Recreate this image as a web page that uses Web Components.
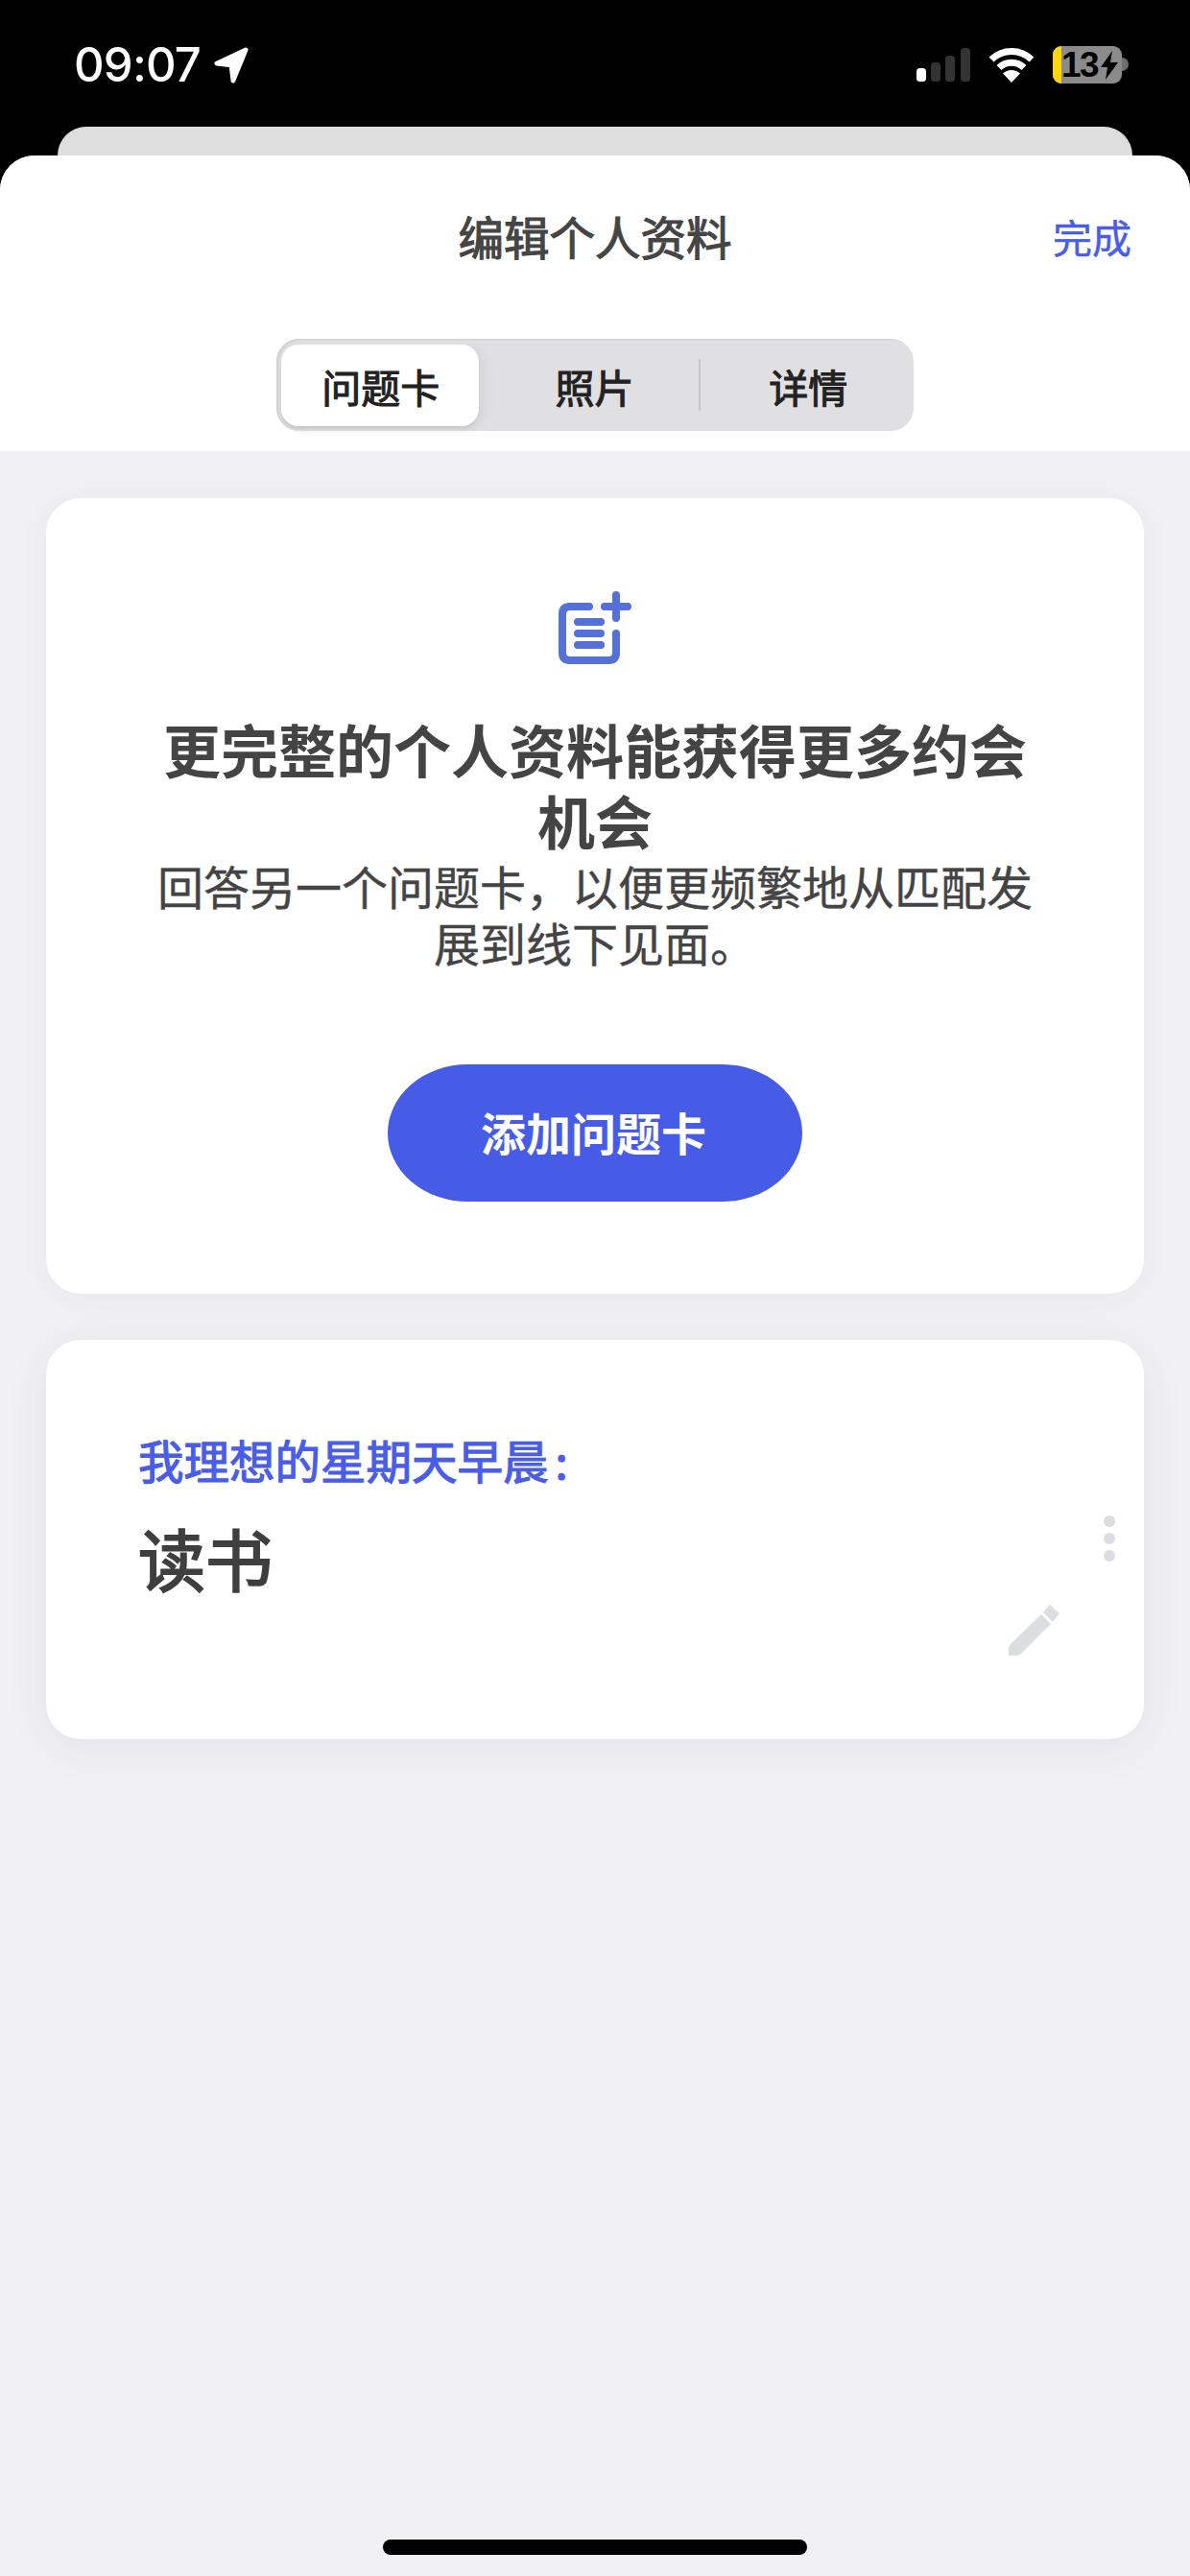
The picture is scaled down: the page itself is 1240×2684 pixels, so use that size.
<!DOCTYPE html>
<html lang="zh">
<head>
<meta charset="utf-8">
<title>编辑个人资料</title>
<style>
    html, body { margin: 0; height: 100%; background: #000; }
    body { font-family: "Noto Sans CJK SC", "Liberation Sans", sans-serif; }
</style>
</head>
<body>
<app-screen>
    <status-bar slot="status" time="09:07" battery="13"></status-bar>
    <sheet-header slot="header" action="完成">
        编辑个人资料
        <segmented-control slot="tabs" items="问题卡,照片,详情"></segmented-control>
    </sheet-header>
    <prompt-card action="添加问题卡">
        <span slot="title">更完整的个人资料能获得更多约会机会</span>
        回答另一个问题卡，以便更频繁地从匹配发展到线下见面。
    </prompt-card>
    <answer-card question="我理想的星期天早晨">读书</answer-card>
</app-screen>

<script>
customElements.define("app-screen",
class AppScreen extends HTMLElement {
    constructor() {
        super();
        this.attachShadow({mode: "open"});
        this.shadowRoot.innerHTML = `
<style>
    :host {
        display: flex;
        flex-direction: column;
        height: 2684px;
        background: #000;
    }
    .back-sheet {
        flex: none;
        height: 30px;
        margin: 0 60px;
        background: #dedede;
        border-radius: 30px 30px 0 0;
    }
    .sheet {
        flex: 1;
        display: flex;
        flex-direction: column;
        background: #f1f1f4;
        border-radius: 36px 36px 0 0;
        overflow: hidden;
    }
    .cards {
        flex: 1;
        display: flex;
        flex-direction: column;
        gap: 48px;
        padding: 49px 48px 0;
    }
    .home {
        flex: none;
        align-self: center;
        width: 442px;
        height: 16px;
        margin-bottom: 22px;
        border-radius: 8px;
        background: #000;
    }
</style>
<slot name="status"></slot>
<div class="back-sheet"></div>
<div class="sheet">
    <slot name="header"></slot>
    <div class="cards"><slot></slot></div>
    <div class="home"></div>
</div>`;
    }
});

customElements.define("status-bar",
class StatusBar extends HTMLElement {
    constructor() {
        super();
        this.attachShadow({mode: "open"});
    }

    connectedCallback() {
        this.shadowRoot.innerHTML = `
<style>
    :host {
        display: flex;
        flex: none;
        align-items: flex-start;
        height: 132px;
        box-sizing: border-box;
        padding: 48px 64px 0 77px;
        color: #fff;
    }
    .time {
        font: 500 49px/40px Inter, "Liberation Sans", sans-serif;
        letter-spacing: -0.8px;
    }
    .arrow { margin: 1px 0 0 14px; }
    .right { display: flex; align-items: flex-start; margin-left: auto; }
    .signal { margin: 2px 0 0; }
    .wifi { margin: 1px 0 0 19px; }
    .battery {
        display: flex;
        align-items: center;
        width: 72px;
        height: 39px;
        margin-left: 19px;
        border-radius: 9px;
        overflow: hidden;
        background: #8b8b8b;
        color: #000;
    }
    .charge { flex: none; width: 9px; height: 100%; background: #ffd60a; }
    .level { font: 700 37px/39px "Liberation Sans", sans-serif; letter-spacing: -1.5px; }
    .bolt { flex: none; margin-left: 2px; }
    .nub { width: 7px; height: 14px; margin-top: 12px; background: #6f6f6f; border-radius: 0 7px 7px 0; }
</style>
<span class="time">${this.getAttribute("time")}</span>
<svg class="arrow" width="36" height="38" viewBox="0 0 38 40">
    <path d="M35 3 L3 18 L19 20 L21 37 Z" fill="#fff" stroke="#fff" stroke-width="5" stroke-linejoin="round"/>
</svg>
<div class="right">
    <svg class="signal" width="56" height="35" viewBox="0 0 56 35">
        <rect x="0" y="21" width="10" height="14" rx="3.5" fill="#fff"/>
        <rect x="15" y="15" width="10" height="20" rx="3.5" fill="#333"/>
        <rect x="30" y="8" width="10" height="27" rx="3.5" fill="#333"/>
        <rect x="46" y="0" width="10" height="35" rx="3.5" fill="#333"/>
    </svg>
    <svg class="wifi" width="48" height="37" viewBox="0 0 48 37">
        <g fill="none" stroke="#fff" stroke-width="7">
            <path d="M3 13 A30 30 0 0 1 45 13"/>
            <path d="M11 21.500 A18.500 18.500 0 0 1 37 21.500"/>
        </g>
        <path d="M24 37 L15 27.500 A13 13 0 0 1 33 27.500 Z" fill="#fff"/>
    </svg>
    <div class="battery">
        <span class="charge"></span>
        <span class="level">${this.getAttribute("battery")}</span>
        <svg class="bolt" width="20" height="30" viewBox="0 0 20 30">
            <path d="M13 0 L1 17 H8 L6 30 L19 12 H11 Z" fill="#000"/>
        </svg>
    </div>
    <span class="nub"></span>
</div>`;
    }
});

customElements.define("sheet-header",
class SheetHeader extends HTMLElement {
    constructor() {
        super();
        this.attachShadow({mode: "open"});
    }

    connectedCallback() {
        this.shadowRoot.innerHTML = `
<style>
    :host {
        display: block;
        flex: none;
        height: 308px;
        background: #fff;
    }
    .bar {
        display: grid;
        grid-template-columns: 1fr auto 1fr;
        align-items: center;
        height: 167px;
        margin-bottom: 24px;
        padding: 0 61px;
        box-sizing: border-box;
    }
    .title {
        grid-column: 2;
        font-size: 47.500px;
        font-weight: 400;
        -webkit-text-stroke: 1.2px #454545;
        color: #454545;
    }
    .action {
        justify-self: end;
        font-size: 41px;
        font-weight: 400;
        -webkit-text-stroke: 0.5px #4a5de6;
        color: #4a5de6;
    }
</style>
<div class="bar">
    <span class="title"><slot></slot></span>
    <span class="action">${this.getAttribute("action")}</span>
</div>
<slot name="tabs"></slot>`;
    }
});

customElements.define("segmented-control",
class SegmentedControl extends HTMLElement {
    constructor() {
        super();
        this.attachShadow({mode: "open"});
    }

    connectedCallback() {
        const items = this.getAttribute("items").split(",");
        const cells = items.map((item, i) => {
            return `<span class="cell ${i == 0 ? "active" : ""} ${i == 2 ? "split" : ""}">${item}</span>`;
        }).join("");
        this.shadowRoot.innerHTML = `
<style>
    :host {
        display: grid;
        grid-template-columns: repeat(3, 1fr);
        width: 664px;
        height: 96px;
        box-sizing: border-box;
        margin: 0 auto;
        padding: 6px 6px 5px 5px;
        background: #e0e0e2;
        border-radius: 24px;
        box-shadow: inset 2px 1px 2px #cfcfd1;
    }
    .cell {
        position: relative;
        display: flex;
        align-items: center;
        justify-content: center;
        font-size: 41px;
        font-weight: 400;
        -webkit-text-stroke: 1.1px #222;
        color: #222;
    }
    .active {
        background: #fff;
        border-radius: 18px;
        box-shadow: 0 3px 3px #c9c9cb, 6px 2px 10px #d6d6d8;
        margin-right: 12px;
        padding-left: 2px;
    }
    .split { padding-left: 10px; }
    .split::before {
        content: "";
        position: absolute;
        left: 0;
        top: 15px;
        bottom: 16px;
        width: 2px;
        background: #c6c6c8;
    }
</style>
${cells}`;
    }
});

customElements.define("prompt-card",
class PromptCard extends HTMLElement {
    constructor() {
        super();
        this.attachShadow({mode: "open"});
    }

    connectedCallback() {
        this.shadowRoot.innerHTML = `
<style>
    :host {
        display: flex;
        flex-direction: column;
        align-items: center;
        height: 829px;
        box-sizing: border-box;
        padding: 97px 107px 0;
        background: #fff;
        border-radius: 36px;
        box-shadow: 0 4px 32px rgba(60, 60, 80, 0.05);
        text-align: center;
        color: #444;
    }
    svg { flex: none; display: block; margin-left: -1px; }
    .title {
        margin-top: 51px;
        font-size: 60px;
        line-height: 74px;
        font-weight: 600;
    }
    .body {
        margin-top: 2px;
        font-size: 48px;
        line-height: 59px;
        font-weight: 400;
        -webkit-text-stroke: 0.4px #444;
    }
    .button {
        display: flex;
        align-items: center;
        justify-content: center;
        flex: none;
        width: 432px;
        height: 143px;
        margin-top: 98px;
        padding: 0 3px 5px 0;
        box-sizing: border-box;
        border-radius: 84px / 72px;
        background: #475ce6;
        color: #fff;
        font-size: 47px;
        font-weight: 600;
    }
</style>
<svg width="76" height="76" viewBox="0 0 76 76" fill="none" stroke="#5570d6" stroke-width="8" stroke-linecap="round" stroke-linejoin="round">
    <path d="M32 16 H12 Q4 16 4 24 V64 Q4 72 12 72 H52 Q60 72 60 64 V44"/>
    <path d="M20 32 H44 M20 44 H44 M20 56 H44"/>
    <path d="M48 16 H72 M60 4 V28"/>
</svg>
<div class="title"><slot name="title"></slot></div>
<div class="body"><slot></slot></div>
<div class="button">${this.getAttribute("action")}</div>`;
    }
});

customElements.define("answer-card",
class AnswerCard extends HTMLElement {
    constructor() {
        super();
        this.attachShadow({mode: "open"});
    }

    connectedCallback() {
        this.shadowRoot.innerHTML = `
<style>
    :host {
        display: flex;
        height: 416px;
        box-sizing: border-box;
        padding: 0 30px 0 96px;
        background: #fff;
        border-radius: 36px;
        box-shadow: 0 8px 48px rgba(60, 60, 80, 0.07);
    }
    .text { flex: 1; padding-top: 95px; }
    .question {
        font-size: 47.500px;
        line-height: 60px;
        font-weight: 400;
        -webkit-text-stroke: 1.2px #4a5de6;
        color: #4a5de6;
    }
    .colon { margin-left: 7px; }
    .answer {
        margin-top: 27px;
        font-size: 70px;
        line-height: 90px;
        font-weight: 400;
        -webkit-text-stroke: 2px #3f3f3f;
        color: #3f3f3f;
    }
    .tools {
        display: flex;
        flex-direction: column;
        align-items: flex-end;
        padding-top: 183px;
    }
    .dots { display: flex; flex-direction: column; gap: 6px; }
    .dots span { width: 12px; height: 12px; border-radius: 50%; background: #dcdde0; }
    .pencil { margin: 45px 57px 0 0; }
</style>
<div class="text">
    <div class="question">${this.getAttribute("question")}<span class="colon">:</span></div>
    <div class="answer"><slot></slot></div>
</div>
<div class="tools">
    <div class="dots"><span></span><span></span><span></span></div>
    <svg class="pencil" width="54" height="54" viewBox="0 0 54 54" fill="#dcdde0">
        <path d="M34 10 L44 20 L13 51 Q11 53 8 53 H0 V45 Q0 43 2 41 Z"/>
        <path d="M43 0 L53 9 L46 18 L36 8 Z"/>
    </svg>
</div>`;
    }
});
</script>
</body>
</html>
